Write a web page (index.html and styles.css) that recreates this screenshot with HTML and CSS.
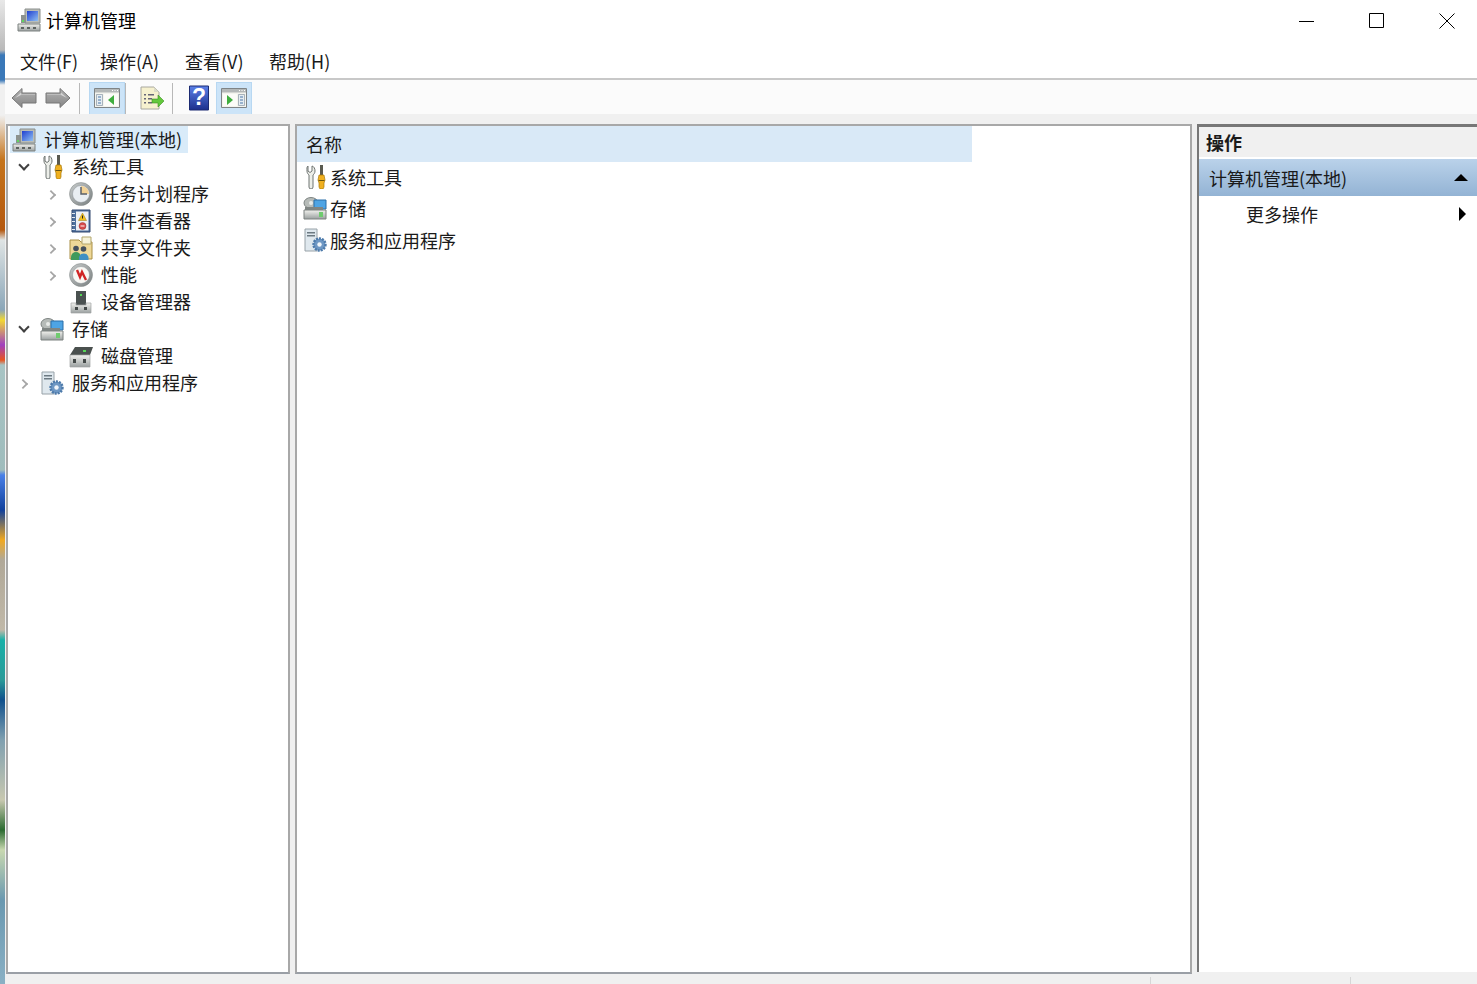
FILE: index.html
```html
<!DOCTYPE html>
<html lang="zh-CN">
<head>
  <meta charset="UTF-8" />
  <title>计算机管理</title>
  <link rel="stylesheet" href="styles.css">
</head>
<body>
  <svg class="defs" width="0" height="0">
    <defs>
      <linearGradient id="metal" x1="0" y1="0" x2="0" y2="1"><stop offset="0" stop-color="#f2f2ee"/><stop offset="1" stop-color="#9aa0a0"/></linearGradient>
      <linearGradient id="blue" x1="0" y1="0" x2="1" y2="1"><stop offset="0" stop-color="#1f3fd0"/><stop offset="1" stop-color="#8fc0f2"/></linearGradient>
      <linearGradient id="ring" x1="0" y1="0" x2="1" y2="1"><stop offset="0" stop-color="#c8cccc"/><stop offset="1" stop-color="#7a8080"/></linearGradient>
      <linearGradient id="arrow" x1="0" y1="0" x2="0" y2="1"><stop offset="0" stop-color="#b4b4b4"/><stop offset="1" stop-color="#858585"/></linearGradient>
      <linearGradient id="help" x1="0" y1="0" x2="0" y2="1"><stop offset="0" stop-color="#5a80e8"/><stop offset="1" stop-color="#1c2f8c"/></linearGradient>
      <symbol id="i-computer" viewBox="0 0 24 24">
        <path d="M8 1h15v14H8z" fill="#b9bdb8" stroke="#8b8f8c"/>
        <path d="M10 3h11v10H10z" fill="url(#blue)"/>
        <path d="M4 7h5v8H4z" fill="#8c928e"/>
        <path d="M5 12h2v2H5z" fill="#5fd65f"/>
        <path d="M1 16h22v7H1z" fill="url(#metal)" stroke="#7c8280"/>
        <path d="M4 19h3v2H4zM10 19h3v2h-3zM16 19h3v2h-3z" fill="#5c6260"/>
      </symbol>
      <symbol id="i-tools" viewBox="0 0 24 24">
        <path d="M5 1v5l2 1.500L9 6V1c2 .5 3 2.500 3 5 0 2-1 3-2 4v12a2 2 0 0 1-4 0V10C5 9 4 8 4 6c0-2.500-.5-4 1-5z" fill="#eceee9" stroke="#6f7472"/>
        <path d="M17 0h3v10h-3z" fill="#5a5a50"/>
        <path d="M16 10h5l1 5-1 3v4l-1 2h-3l-1-2v-4l-1-3z" fill="#f0b020" stroke="#a87808" stroke-width=".7"/>
        <path d="M15.500 15h6v1h-6z" fill="#6a5510"/>
      </symbol>
      <symbol id="i-clock" viewBox="0 0 24 24">
        <circle cx="12" cy="12" r="11.500" fill="url(#ring)" stroke="#7e8484" stroke-width=".5"/>
        <circle cx="12" cy="12" r="8.500" fill="#e9eef2" stroke="#8b9196" stroke-width=".5"/>
        <path d="M12 12V4a8 8 0 0 1 8 8z" fill="#f2d296"/>
        <path d="M12 5v7h6" fill="none" stroke="#59606a" stroke-width="1.500"/>
      </symbol>
      <symbol id="i-log" viewBox="0 0 24 24">
        <path d="M3 1h18v22H3z" fill="#4e6f9c" stroke="#32496e"/>
        <path d="M7 2.500h12.500v19H7z" fill="#eef0f4"/>
        <path d="M3 4h3v1H3zM3 8h3v1H3zM3 12h3v1H3zM3 16h3v1H3zM3 20h3v1H3z" fill="#e6eaf0"/>
        <path d="M13.500 4l4 7.500h-8z" fill="#f2c01e" stroke="#a07c10" stroke-width=".5"/>
        <path d="M13 6.500h1v3h-1z" fill="#222"/>
        <circle cx="13.500" cy="17" r="3.500" fill="#d84a4a" stroke="#923030" stroke-width=".5"/>
        <path d="M11.500 16.500h4v1h-4z" fill="#fff"/>
      </symbol>
      <symbol id="i-share" viewBox="0 0 24 24">
        <path d="M1 4h9l2 2h11v17H1z" fill="#eed898" stroke="#a98f45"/>
        <path d="M13 1h9v7h-9z" fill="#f6f2d8" stroke="#b3a66c"/>
        <circle cx="7" cy="12.500" r="2.800" fill="#45505c"/>
        <path d="M2 24v-3a5 5 0 0 1 10 0v3z" fill="#3f9a5c"/>
        <circle cx="14.500" cy="13" r="2.800" fill="#45505c"/>
        <path d="M10 24v-3a5 5 0 0 1 9.500 0v3z" fill="#3f90c4"/>
      </symbol>
      <symbol id="i-perf" viewBox="0 0 24 24">
        <circle cx="12" cy="12" r="11.500" fill="url(#ring)" stroke="#7e8484" stroke-width=".5"/>
        <circle cx="12" cy="12" r="8.500" fill="#f8f8f4" stroke="#8b9196" stroke-width=".5"/>
        <path d="M8 7l3 7 2-5 4 8" fill="none" stroke="#d02525" stroke-width="2.400"/>
      </symbol>
      <symbol id="i-device" viewBox="0 0 24 24">
        <path d="M7 1h10v14H7z" fill="#4a5150"/>
        <path d="M11 4h2v2h-2z" fill="#55d655"/>
        <path d="M2 13h5v2h10v-2h5v10H2z" fill="url(#metal)" stroke="#a0a5a4" stroke-width=".7"/>
        <path d="M6 17h3v3H6zM15 17h3v3h-3z" fill="#444a49"/>
      </symbol>
      <symbol id="i-storage" viewBox="0 0 24 24">
        <ellipse cx="8" cy="7" rx="7" ry="5.500" fill="#b6bbb8" stroke="#7f8583"/>
        <circle cx="8" cy="7" r="2" fill="#e8eae8"/>
        <path d="M11 4h12v9H11z" fill="#4ea4e4" stroke="#2b6fa8"/>
        <path d="M2 11h18v3H2z" fill="#7f8583"/>
        <path d="M1 14h22v9H1z" fill="url(#metal)" stroke="#7c8280"/>
        <path d="M16 16h4v5h-4z" fill="#6fcb6f"/>
      </symbol>
      <symbol id="i-disk" viewBox="0 0 24 24">
        <path d="M6 3h18l-3 8H1z" fill="#4a504e"/>
        <path d="M14 6h3v2h-3z" fill="#55d655"/>
        <path d="M1 11h20v12H1z" fill="url(#metal)" stroke="#a0a5a4" stroke-width=".7"/>
        <path d="M4 15h3v4H4zM14 15h3v4h-3z" fill="#444a49"/>
      </symbol>
      <symbol id="i-service" viewBox="0 0 24 24">
        <path d="M2 1h12v22H2z" fill="#dfe8ee" stroke="#98a2a8"/>
        <path d="M4 4h8v1.500H4zM4 7h8v1.500H4z" fill="#6d7a82"/>
        <circle cx="16.500" cy="16.500" r="6" fill="#6d97c4" stroke="#4d7aaa" stroke-dasharray="2 1" stroke-width="2.400"/>
        <circle cx="16.500" cy="16.500" r="2.200" fill="#f0f5fa"/>
      </symbol>
    </defs>
  </svg>

  <div class="desktop"></div>

  <div class="window">
    <header class="titlebar">
      <svg class="icon"><use href="#i-computer"/></svg>
      <span class="title">计算机管理</span>
      <div class="controls">
        <svg width="16" height="16" viewBox="0 0 16 16"><path d="M0 8.500h15" stroke="#000" fill="none"/></svg>
        <svg width="16" height="16" viewBox="0 0 16 16"><path d="M.5.500h14v14H.5z" stroke="#000" fill="none"/></svg>
        <svg width="16" height="16" viewBox="0 0 16 16"><path d="M.5.500l15 15M15.500.500l-15 15" stroke="#000" fill="none"/></svg>
      </div>
    </header>

    <nav class="menubar">
      <span>文件(F)</span>
      <span>操作(A)</span>
      <span>查看(V)</span>
      <span>帮助(H)</span>
    </nav>

    <div class="toolbar">
      <button class="tool"><svg width="26" height="22" viewBox="0 0 26 22"><path d="M1 11L11 1.500V6h14v10H11v4.500z" fill="url(#arrow)" stroke="#777"/><path d="M4 11l6-5.500V7.500h14V8H10z" fill="#d4d4d4"/></svg></button>
      <button class="tool"><svg width="26" height="22" viewBox="0 0 26 22"><path d="M25 11L15 1.500V6H1v10h14v4.500z" fill="url(#arrow)" stroke="#777"/><path d="M22 11l-6-5.500V7.500H2V8h14z" fill="#d4d4d4"/></svg></button>
      <i class="sep"></i>
      <button class="tool on"><svg width="26" height="20" viewBox="0 0 26 20"><path d="M.5.500h25v19H.5z" fill="#f4f4ee" stroke="#7f8486"/><path d="M1 1h24v3.500H1z" fill="#b4b8b8"/><path d="M18 2h1v1h-1zM20.500 2h1v1h-1zM23 2h1v1h-1z" fill="#fff"/><path d="M2.500 6.500h6v11h-6z" fill="#e6edf2" stroke="#8a98a4" stroke-width=".7"/><path d="M4 8.500h3v1H4zM4 11.500h3v1H4zM4 14.500h3v1H4z" fill="#4a78a8"/><path d="M10 6h14v12H10z" fill="#fcfcf8"/><path d="M20 7l-6 5 6 5z" fill="#3fae3f"/></svg></button>
      <i class="sep tight"></i>
      <button class="tool"><svg width="26" height="24" viewBox="0 0 26 24"><path d="M2 1h13l5 5v17H2z" fill="#f6f1cf" stroke="#a8a8a0"/><path d="M15 1v5h5z" fill="#dcdcc8"/><path d="M5 8h2v1.500H5zM9 8h6v1.500H9zM5 12h2v1.500H5zM9 12h4v1.500H9zM5 16h2v1.500H5zM9 16h4v1.500H9z" fill="#667"/><path d="M13 13h6V9l6 6-6 6v-4h-6z" fill="#62c83c" stroke="#3d8e22" stroke-width=".6"/></svg></button>
      <i class="sep mid"></i>
      <button class="tool"><svg width="22" height="26" viewBox="0 0 22 26"><path d="M1.500 1h19v24h-19z" fill="url(#help)" stroke="#1c2b72"/><text class="help-mark" x="11" y="20" text-anchor="middle">?</text></svg></button>
      <button class="tool on"><svg width="26" height="20" viewBox="0 0 26 20"><path d="M.5.500h25v19H.5z" fill="#f4f4ee" stroke="#7f8486"/><path d="M1 1h24v3.500H1z" fill="#b4b8b8"/><path d="M18 2h1v1h-1zM20.500 2h1v1h-1zM23 2h1v1h-1z" fill="#fff"/><path d="M2 6h14v12H2z" fill="#fcfcf8"/><path d="M6 7l6 5-6 5z" fill="#3fae3f"/><path d="M17.500 6.500h6v11h-6z" fill="#e6edf2" stroke="#8a98a4" stroke-width=".7"/><path d="M19 8.500h3v1h-3zM19 11.500h3v1h-3zM19 14.500h3v1h-3z" fill="#4a78a8"/></svg></button>
    </div>

    <main class="panes">
      <aside class="pane tree">
        <div class="row root"><svg class="icon"><use href="#i-computer"/></svg><span class="label">计算机管理(本地)</span></div>
        <div class="row lv1"><span class="twisty open"></span><svg class="icon"><use href="#i-tools"/></svg><span class="label">系统工具</span></div>
        <div class="row lv2"><span class="twisty"></span><svg class="icon"><use href="#i-clock"/></svg><span class="label">任务计划程序</span></div>
        <div class="row lv2"><span class="twisty"></span><svg class="icon"><use href="#i-log"/></svg><span class="label">事件查看器</span></div>
        <div class="row lv2"><span class="twisty"></span><svg class="icon"><use href="#i-share"/></svg><span class="label">共享文件夹</span></div>
        <div class="row lv2"><span class="twisty"></span><svg class="icon"><use href="#i-perf"/></svg><span class="label">性能</span></div>
        <div class="row lv2"><span class="twisty none"></span><svg class="icon"><use href="#i-device"/></svg><span class="label">设备管理器</span></div>
        <div class="row lv1"><span class="twisty open"></span><svg class="icon"><use href="#i-storage"/></svg><span class="label">存储</span></div>
        <div class="row lv2"><span class="twisty none"></span><svg class="icon"><use href="#i-disk"/></svg><span class="label">磁盘管理</span></div>
        <div class="row lv1"><span class="twisty"></span><svg class="icon"><use href="#i-service"/></svg><span class="label">服务和应用程序</span></div>
      </aside>

      <section class="pane list">
        <div class="list-head">名称</div>
        <div class="list-row"><svg class="icon"><use href="#i-tools"/></svg><span>系统工具</span></div>
        <div class="list-row"><svg class="icon"><use href="#i-storage"/></svg><span>存储</span></div>
        <div class="list-row"><svg class="icon"><use href="#i-service"/></svg><span>服务和应用程序</span></div>
      </section>

      <aside class="actions">
        <div class="actions-head">操作</div>
        <div class="actions-group"><span>计算机管理(本地)</span><i class="arrow-up"></i></div>
        <div class="actions-item"><span>更多操作</span><i class="arrow-right"></i></div>
      </aside>
    </main>

    <footer class="statusbar">
      <i></i>
      <i></i>
    </footer>
  </div>
</body>
</html>
```

FILE: styles.css
```css
* {
  margin: 0;
  padding: 0;
  box-sizing: border-box;
}

html, body {
  height: 100%;
  overflow: hidden;
}

body {
  display: flex;
  background: #fff;
  color: #1a1a1a;
  font-family: "Noto Sans CJK SC", "Noto Sans", sans-serif;
  font-size: 18px;
}

.defs {
  position: absolute;
}

.desktop {
  width: 5px;
  flex: none;
  background: linear-gradient(to bottom,
    #e8e8e8 0, #b9b9b9 50px, #3a78b8 55px, #3a78b8 80px, #f0f0f0 85px, #f0f0f0 115px,
    #c5741c 160px, #b4580f 230px, #dfe4e4 240px, #8ba6b8 310px,
    #f2d832 320px, #a040c0 345px, #e8551f 360px, #a8c4c4 365px, #9fbcbc 470px,
    #4a80e8 475px, #10409c 510px, #f0a820 540px, #b0a898 560px, #c0b8a8 630px,
    #18b0a8 640px, #2a9a98 680px, #10508c 700px, #80a0b0 740px, #c8c8b0 800px,
    #2a6a30 830px, #c8d8b0 850px, #6a98b0 900px, #8ab0c4 984px);
}

.window {
  flex: 1;
  min-width: 0;
  display: flex;
  flex-direction: column;
}

.icon {
  width: 24px;
  height: 24px;
  flex: none;
}

.titlebar {
  height: 40px;
  display: flex;
  align-items: center;
  padding-left: 12px;
  flex: none;
}

.title {
  margin-left: 5px;
  color: #000;
}

.controls {
  margin-left: auto;
  display: flex;
  gap: 54px;
  padding: 2px 22px 0 0;
}

.menubar {
  height: 38px;
  display: grid;
  grid-template-columns: 80px 85px 84px auto;
  align-items: center;
  padding: 4px 0 0 15px;
  flex: none;
}

.toolbar {
  height: 36px;
  display: flex;
  align-items: center;
  padding: 2px 0 0 2px;
  background: #fbfbfb;
  border-top: 2px solid #c8c8c8;
  flex: none;
}

.tool {
  width: 34px;
  height: 33px;
  display: flex;
  align-items: center;
  justify-content: center;
  border: 0;
  background: none;
}

.tool.on {
  width: 36px;
  background: #cce4f8;
  border: 1px solid #b8d8f2;
}

.sep {
  width: 1px;
  height: 31px;
  margin: 0 9px 0 4px;
  background: #b8b8b8;
}

.sep.tight {
  margin-left: 0;
}

.sep.mid {
  margin-left: 3px;
}

.help-mark {
  fill: #fff;
  font-family: "Liberation Sans", sans-serif;
  font-size: 23px;
  font-weight: bold;
}

.panes {
  flex: 1;
  min-height: 0;
  display: flex;
  gap: 5px;
  padding: 10px 0 0 1px;
  background: #f0f0f0;
}

.pane {
  background: #fff;
  border: 2px solid #a8a8a8;
  border-bottom-color: #9a9fa6;
}

.tree {
  width: 284px;
  padding-left: 2px;
}

.row {
  height: 27px;
  display: flex;
  align-items: center;
}

.row .label {
  margin-left: 8px;
  padding-bottom: 2px;
}

.root {
  width: 178px;
  background: #d9ebf9;
}

.root .icon {
  margin-left: 2px;
}

.root .label {
  margin-left: 8px;
}

.lv1 {
  padding-left: 7px;
}

.lv2 {
  padding-left: 35px;
}

.lv1 .icon {
  margin-left: 11px;
}

.lv2 .icon {
  margin-left: 12px;
}

.twisty {
  width: 12px;
  height: 12px;
  flex: none;
  position: relative;
}

.twisty::after {
  content: "";
  position: absolute;
  left: 2px;
  top: 3px;
  width: 6px;
  height: 6px;
  border-top: 2px solid #a6a6a6;
  border-right: 2px solid #a6a6a6;
  transform: rotate(45deg) scale(.9);
}

.twisty.open::after {
  left: 3px;
  top: 0;
  border-color: #404040;
  transform: rotate(135deg);
}

.twisty.none::after {
  display: none;
}

.list {
  flex: 1;
  min-width: 0;
}

.list-head {
  width: 675px;
  height: 36px;
  display: flex;
  align-items: center;
  padding-left: 9px;
  margin-bottom: -1px;
  background: #d9e9f7;
}

.list-row {
  height: 31.5px;
  display: flex;
  align-items: center;
  padding-left: 6px;
}

.list-row span {
  margin-left: 3px;
}

.actions {
  width: 280px;
  flex: none;
  display: flex;
  flex-direction: column;
  margin-bottom: 2px;
  background: #fff;
  border-top: 3px solid #777;
  border-left: 2px solid #777;
}

.actions-head {
  height: 30px;
  display: flex;
  align-items: center;
  padding-left: 7px;
  font-weight: bold;
  background: #f0f0f0;
  border-bottom: 2px solid #fff;
  box-sizing: content-box;
}

.actions-group {
  height: 37px;
  display: flex;
  align-items: center;
  justify-content: space-between;
  padding: 0 9px 0 10px;
  background: linear-gradient(to bottom, #bad2ea, #93b3d4);
}

.actions-item {
  height: 35px;
  display: flex;
  align-items: center;
  justify-content: space-between;
  padding: 0 11px 0 47px;
}

.arrow-up {
  width: 0;
  height: 0;
  border-left: 7px solid transparent;
  border-right: 7px solid transparent;
  border-bottom: 7px solid #000;
}

.arrow-right {
  width: 0;
  height: 0;
  border-top: 7px solid transparent;
  border-bottom: 7px solid transparent;
  border-left: 7px solid #000;
}

.statusbar {
  height: 10px;
  flex: none;
  display: flex;
  justify-content: flex-end;
  gap: 199px;
  padding: 3px 126px 0 0;
  background: #f0f0f0;
}

.statusbar i {
  width: 1px;
  background: #d6d6d6;
}
```
